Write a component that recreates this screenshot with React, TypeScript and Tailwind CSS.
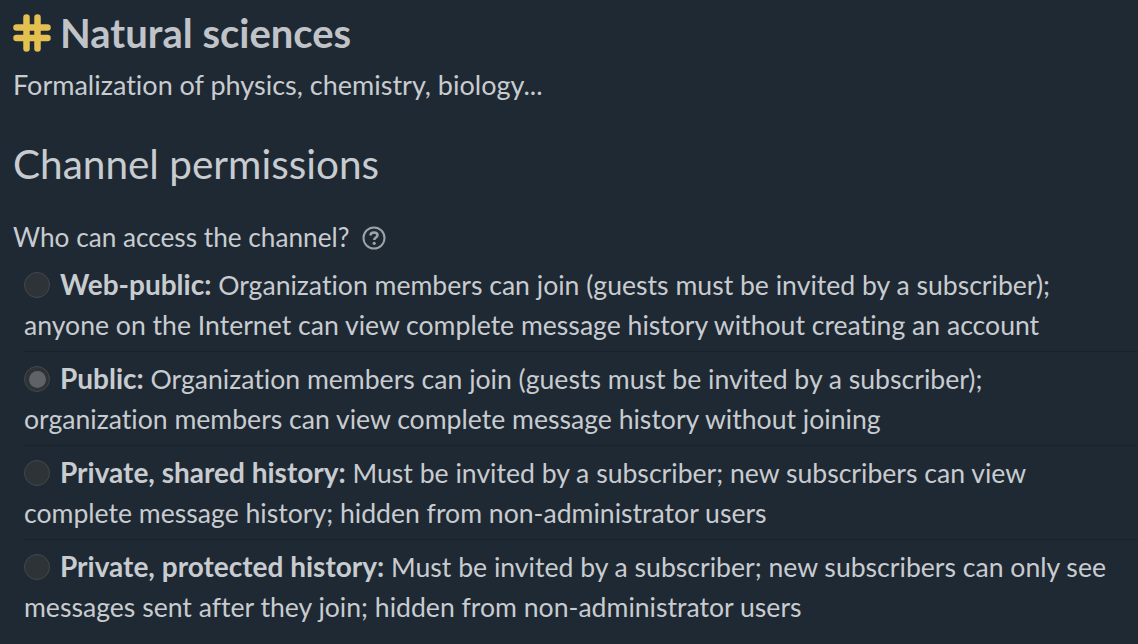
import React from "react";

type Option = { id: string; title: string; first: string; second: string; checked?: boolean };

const options: Option[] = [
  {
    id: "web-public",
    title: "Web-public:",
    first: "Organization members can join (guests must be invited by a subscriber);",
    second: "anyone on the Internet can view complete message history without creating an account",
  },
  {
    id: "public",
    title: "Public:",
    first: "Organization members can join (guests must be invited by a subscriber);",
    second: "organization members can view complete message history without joining",
    checked: true,
  },
  {
    id: "private-shared",
    title: "Private, shared history:",
    first: "Must be invited by a subscriber; new subscribers can view",
    second: "complete message history; hidden from non-administrator users",
  },
  {
    id: "private-protected",
    title: "Private, protected history:",
    first: "Must be invited by a subscriber; new subscribers can only see",
    second: "messages sent after they join; hidden from non-administrator users",
  },
];

const HashIcon = () => (
  <svg width="38" height="38" viewBox="0 0 38 38" className="shrink-0">
    <g stroke="#e3c04f" strokeWidth="6.500" strokeLinecap="round" fill="none">
      <path d="M13.500 3.500V34.500" />
      <path d="M24.500 3.500V34.500" />
      <path d="M3.500 13.500H34.500" />
      <path d="M3.500 24H34.500" />
    </g>
  </svg>
);

const HelpIcon = () => (
  <svg width="24" height="24" viewBox="0 0 24 24" fill="none" className="shrink-0">
    <circle cx="12" cy="12" r="10.500" stroke="#9ea3a8" strokeWidth="2" />
    <path d="M8.500 9.500C8.500 7.500 10 6.500 12 6.500C14 6.500 15.500 7.600 15.500 9.300C15.500 11.600 12.200 11.500 12.200 14" stroke="#9ea3a8" strokeWidth="2.500" fill="none" />
    <circle cx="12.200" cy="17.300" r="1.600" fill="#9ea3a8" />
  </svg>
);

const Radio = ({ checked }: { checked?: boolean }) => (
  <span className="inline-flex w-[26px] h-[26px] rounded-full bg-[#2e3338] border border-[#43484d] items-center justify-center mr-[10px] mt-[8px] align-top">
    {checked && <span className="block w-[17px] h-[17px] rounded-full bg-[#5f6367]" />}
  </span>
);

export default function App() {
  return (
    <div className="w-[1138px] h-[644px] overflow-hidden bg-[#1f2933] text-[#c8ccd0] font-['Lato','Noto_Sans',sans-serif] [font-variant-ligatures:none] pl-[13px]">
      <div className="flex items-center gap-[9px] h-[40px] mt-[13px]">
        <HashIcon />
        <h1 className="text-[40px] font-bold leading-[40px] text-[#c0c4c9]">Natural sciences</h1>
      </div>
      <p className="text-[27px] leading-[40px] mt-[12px]">Formalization of physics, chemistry, biology...</p>
      <h2 className="text-[40.500px] leading-[50px] mt-[34px]">Channel permissions</h2>
      <div className="flex items-center gap-[13px] h-[40px] mt-[29px] text-[26.200px]">
        <span>Who can access the channel?</span>
        <HelpIcon />
      </div>
      <div className="ml-[11px]">
        {options.map((option, index) => (
          <div
            key={option.id}
            className={`h-[94px] text-[26.600px] leading-[40px] pt-[6px] whitespace-nowrap ${
              index < options.length - 1 ? "border-b border-[#1a232b]" : ""
            }`}
          >
            <Radio checked={option.checked} />
            <b className="font-bold text-[28px]">{option.title}</b> {option.first}
            <br />
            {option.second}
          </div>
        ))}
      </div>
    </div>
  );
}
